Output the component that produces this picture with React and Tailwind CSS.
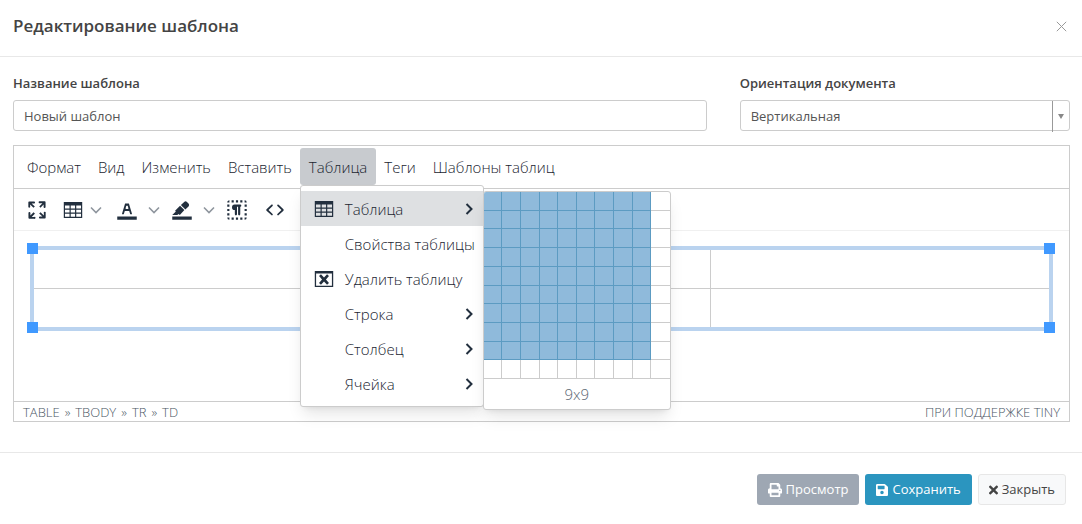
import React from 'react';
import { FaPrint, FaSave, FaTimes } from 'react-icons/fa';
import clsx from 'clsx';

const ICONS = {
  fullscreen:
    'M15.3 10l-1.2-1.3 2.9-3h-2.3a.9.9 0 110-1.7H19c.5 0 .9.4.9.9v4.4a.9.9 0 11-1.8 0V7l-2.9 3zm0 4l3 3v-2.3a.9.9 0 111.7 0V19c0 .5-.4.9-.9.9h-4.4a.9.9 0 110-1.8H17l-3-2.9 1.3-1.2zM10 15.4l-2.9 3h2.3a.9.9 0 110 1.7H5a.9.9 0 01-.9-.9v-4.4a.9.9 0 111.8 0V17l2.9-3 1.2 1.3zM8.7 10L5.7 7v2.3a.9.9 0 01-1.7 0V5c0-.5.4-.9.9-.9h4.4a.9.9 0 010 1.8H7l3 2.9-1.3 1.2z',
  table:
    'M3.5 4.6h17v14.8h-17V4.6zm1.1 3.3v2.8h4.2V7.9H4.6zm5.3 0v2.8h4V7.9h-4zm5.1 0v2.8h4.4V7.9H15zM4.6 11.8v2.6h4.2v-2.6H4.6zm5.3 0v2.6h4v-2.6h-4zm5.1 0v2.6h4.4v-2.6H15zM4.6 15.5v2.8h4.2v-2.8H4.6zm5.3 0v2.8h4v-2.8h-4zm5.1 0v2.8h4.4v-2.8H15z',
  textColor:
    'M3 18h18v3H3zM8.7 16h-.8a.5.5 0 01-.5-.6l2.7-9c.1-.3.3-.4.5-.4h2.8c.2 0 .4.1.5.4l2.7 9a.5.5 0 01-.5.6h-.8a.5.5 0 01-.4-.4l-.7-2.2c0-.3-.3-.4-.5-.4h-3.4c-.2 0-.4.1-.5.4l-.7 2.2c0 .3-.2.4-.4.4zm2.6-7.6l-.6 2a.5.5 0 00.5.6h1.6a.5.5 0 00.5-.6l-.6-2c0-.3-.3-.4-.5-.4h-.4c-.2 0-.4.1-.5.4z',
  highlight:
    'M3 18h18v3H3zM7.7 16.7H3l3.3-3.3-.7-.8L10.2 8l4 4.1-4 4.2c-.2.2-.6.2-.8 0l-.6-.7-1.1 1.1zm5-7.5L11 7.4l3-2.9a2 2 0 012.6 0L18 6c.7.7.7 2 0 2.7l-2.9 2.9-1.8-1.8-.5-.6',
  visualBlocks:
    'M9 19v2H7v-2h2zm-4 0v2a2 2 0 01-2-2h2zm8 0v2h-2v-2h2zm8 0a2 2 0 01-2 2v-2h2zm-4 0v2h-2v-2h2zM15 7a1 1 0 010 2v7a1 1 0 01-2 0V9h-1v7a1 1 0 01-2 0v-4a2.5 2.5 0 01-.2-5H15zM5 15v2H3v-2h2zm16 0v2h-2v-2h2zM5 11v2H3v-2h2zm16 0v2h-2v-2h2zM5 7v2H3V7h2zm16 0v2h-2V7h2zM5 3v2H3c0-1.1.9-2 2-2zm8 0v2h-2V3h2zm6 0a2 2 0 012 2h-2V3zM9 3v2H7V3h2zm8 0v2h-2V3h2z',
  source:
    'M9.8 15.7c.3.3.3.8 0 1-.3.4-.9.4-1.2 0l-4.4-4.1a.8.8 0 010-1.2l4.4-4.2c.3-.3.9-.3 1.2 0 .3.3.3.8 0 1.1L6 12l3.8 3.7zM14.2 15.7c-.3.3-.3.8 0 1 .4.4.9.4 1.2 0l4.4-4.1c.3-.3.3-.9 0-1.2l-4.4-4.2a.8.8 0 00-1.2 0c-.3.3-.3.8 0 1.1L18 12l-3.8 3.7z',
  tableDelete:
    'M3.5 4.6h17v14.8h-17V4.6zm1.2 2.4v11.2h14.6V7H4.7zM7.4 9.2l1.8-1.6 2.8 3 2.8-3 1.8 1.6-2.8 3.2 2.8 3.2-1.8 1.6-2.8-3-2.8 3-1.8-1.6 2.8-3.2z',
};

const Icon = ({ name }) => (
  <svg className="w-[26px] h-[26px] shrink-0" viewBox="0 0 24 24" fill="#222f3e" fillRule="evenodd">
    <path d={ICONS[name]} />
  </svg>
);

const ChevronDown = () => (
  <svg className="w-3 h-3 shrink-0" viewBox="0 0 12 12" fill="none" stroke="#8f969e" strokeWidth="1.6">
    <path d="M1 3.5l5 5 5-5" />
  </svg>
);

const ChevronRight = () => (
  <svg className="w-3 h-3 shrink-0" viewBox="0 0 12 12" fill="none" stroke="#222f3e" strokeWidth="2">
    <path d="M3.5 1l5 5-5 5" />
  </svg>
);

const ToolButton = ({ name, label }) => (
  <button type="button" aria-label={label} className="flex items-center">
    <Icon name={name} />
  </button>
);

const SplitButton = ({ name, label, className }) => (
  <div className={clsx('flex items-center', className)}>
    <ToolButton name={name} label={label} />
    <button type="button" aria-label={`${label}: меню`} className="flex items-center">
      <ChevronDown />
    </button>
  </div>
);

const MenuButton = ({ children, active }) => (
  <button
    type="button"
    className={clsx('h-[37px] pt-[2px] px-[9px] rounded-[3px] whitespace-nowrap', active && 'bg-[#c8cbcf]')}
  >
    {children}
  </button>
);

const menuItems = [
  { label: 'Таблица', icon: 'table', arrow: true, active: true },
  { label: 'Свойства таблицы' },
  { label: 'Удалить таблицу', icon: 'tableDelete' },
  { label: 'Строка', arrow: true },
  { label: 'Столбец', arrow: true },
  { label: 'Ячейка', arrow: true },
];

const GRID_SIZE = 10;

const SizePicker = ({ rows, cols }) => (
  <div className="absolute left-full top-[5px] w-[188px] rounded-[3px] border border-[#ccc] bg-white shadow-lg overflow-hidden">
    <div className="grid grid-cols-10 grid-rows-10 h-[187px]">
      {Array.from({ length: GRID_SIZE * GRID_SIZE }, (_, i) => {
        const row = Math.floor(i / GRID_SIZE) + 1;
        const col = (i % GRID_SIZE) + 1;
        const selected = row <= rows && col <= cols;
        return (
          <button
            key={i}
            type="button"
            aria-label={`${col}x${row}`}
            className={clsx(
              'border-b',
              col < GRID_SIZE && 'border-r',
              selected ? 'bg-[#8fbadb] border-[#5c9bc2]' : 'border-[#ccc]'
            )}
          />
        );
      })}
    </div>
    <div className="h-[30px] flex items-center justify-center text-[#5c6773]">
      {cols}x{rows}
    </div>
  </div>
);

const TableMenu = () => (
  <div className="absolute z-10 left-0 top-full w-[184px] rounded-[3px] border border-[#ccc] bg-white shadow-lg py-[5px]">
    {menuItems.map((item) => (
      <button
        key={item.label}
        type="button"
        className={clsx(
          'w-full h-[35px] pl-[10px] pr-2 flex items-center whitespace-nowrap',
          item.active && 'bg-[#dee0e2]'
        )}
      >
        <span className="w-[26px] mr-2 shrink-0">{item.icon && <Icon name={item.icon} />}</span>
        <span className="flex-1 pt-[2px] text-left">{item.label}</span>
        {item.arrow && <ChevronRight />}
      </button>
    ))}
    <SizePicker rows={9} cols={9} />
  </div>
);

const Handle = ({ className }) => (
  <span className={clsx('absolute w-[11px] h-[11px] bg-[#4099ff]', className)} />
);

const Editor = () => (
  <div className="mt-[14px] border border-[#ccc] font-light text-[15px] text-[#1a2430]">
    <div className="h-[43px] pl-1 pt-[2px] flex items-start -space-x-px border-b border-[#ccc]">
      <MenuButton>Формат</MenuButton>
      <MenuButton>Вид</MenuButton>
      <MenuButton>Изменить</MenuButton>
      <MenuButton>Вставить</MenuButton>
      <div className="relative">
        <MenuButton active>Таблица</MenuButton>
        <TableMenu />
      </div>
      <MenuButton>Теги</MenuButton>
      <MenuButton>Шаблоны таблиц</MenuButton>
    </div>

    <div className="h-[42px] px-[10px] flex items-center border-b border-[#f0f0f0]">
      <ToolButton name="fullscreen" label="Полноэкранный режим" />
      <SplitButton name="table" label="Таблица" className="ml-[10px] gap-[4px]" />
      <SplitButton name="textColor" label="Цвет текста" className="ml-3 gap-2" />
      <SplitButton name="highlight" label="Цвет фона" className="ml-[9px] gap-2" />
      <div className="ml-[9px] flex gap-3">
        <ToolButton name="visualBlocks" label="Показывать блоки" />
        <ToolButton name="source" label="Исходный код" />
      </div>
    </div>

    <div className="h-[170px] pt-[15px] px-4">
      <div className="relative border-4 border-[#bad3ef]">
        <table className="w-full table-fixed border-collapse">
          <tbody>
            <tr className="h-[38px] border-b border-[#ccc]">
              <td className="border-r border-[#ccc]" />
              <td className="border-r border-[#ccc]" />
              <td />
            </tr>
            <tr className="h-[39px]">
              <td className="border-r border-[#ccc]" />
              <td className="border-r border-[#ccc]" />
              <td />
            </tr>
          </tbody>
        </table>
        <Handle className="-top-[7px] -left-[7px]" />
        <Handle className="-top-[7px] -right-[6px]" />
        <Handle className="-bottom-[6px] -left-[7px]" />
        <Handle className="-bottom-[6px] -right-[6px]" />
      </div>
    </div>

    <div className="h-[20px] px-[9px] pt-[2px] flex items-center justify-between border-t border-[#ccc] text-[13px] text-[#4a5663]">
      <div className="flex gap-[5px]">
        <span>TABLE</span>
        <span>»</span>
        <span>TBODY</span>
        <span>»</span>
        <span>TR</span>
        <span>»</span>
        <span>TD</span>
      </div>
      <span>ПРИ ПОДДЕРЖКЕ TINY</span>
    </div>
  </div>
);

const App = () => {
  return (
    <div className="bg-white font-['Open_Sans',sans-serif] text-[13px] text-[#444]">
      <header className="h-[57px] pl-[13px] pr-3 pb-1 flex items-center justify-between border-b border-[#e8e8e8]">
        <h1 className="text-[17px] font-semibold">Редактирование шаблона</h1>
        <button type="button" aria-label="Закрыть окно" className="mr-[3px]">
          <svg className="w-[11px] h-[11px]" viewBox="0 0 11 11" stroke="#999" strokeWidth="1">
            <path d="M.8.8l9.4 9.4M10.2.8L.8 10.2" />
          </svg>
        </button>
      </header>

      <main className="pl-[13px] pr-3 pt-4">
        <div className="grid grid-cols-12 gap-[33px]">
          <div className="col-span-8">
            <label htmlFor="name" className="block h-[27px] leading-5 font-semibold">
              Название шаблона
            </label>
            <input
              id="name"
              type="text"
              defaultValue="Новый шаблон"
              className="block w-full h-[31px] px-[10px] rounded-[3px] border border-[#ccc] text-[#555]"
            />
          </div>
          <div className="col-span-4">
            <label htmlFor="orientation" className="block h-[27px] leading-5 font-semibold">
              Ориентация документа
            </label>
            <div className="relative">
              <select
                id="orientation"
                className="block w-full h-[31px] pt-[2px] pl-[10px] pr-5 appearance-none rounded-[3px] border border-[#ccc] text-[#555]"
              >
                <option>Вертикальная</option>
              </select>
              <span className="absolute right-0 top-px h-[31px] w-[18px] border-l border-[#999] flex items-center justify-center pointer-events-none">
                <svg className="w-[6px] h-[5px]" viewBox="0 0 6 5" fill="#888">
                  <path d="M0 0h6L3 5z" />
                </svg>
              </span>
            </div>
          </div>
        </div>
        <Editor />
      </main>

      <footer className="mt-[30px] pt-[21px] pb-[19px] pr-4 flex justify-end gap-[6px] border-t border-[#e8e8e8]">
        <button type="button" className="h-[31px] px-[11px] flex items-center gap-1 rounded-[3px] bg-[#9ea7b3] text-white">
          <FaPrint className="w-[14px] h-[14px]" />
          Просмотр
        </button>
        <button type="button" className="h-[31px] px-[11px] flex items-center gap-1 rounded-[3px] bg-[#2b95bf] text-white">
          <FaSave className="w-3 h-[14px]" />
          Сохранить
        </button>
        <button type="button" className="h-[31px] px-[10px] flex items-center gap-1 rounded-[3px] border border-[#e7e7e7] bg-[#f8f9fa]">
          <FaTimes className="w-[9px] h-[14px]" />
          Закрыть
        </button>
      </footer>
    </div>
  );
};

export default App;
